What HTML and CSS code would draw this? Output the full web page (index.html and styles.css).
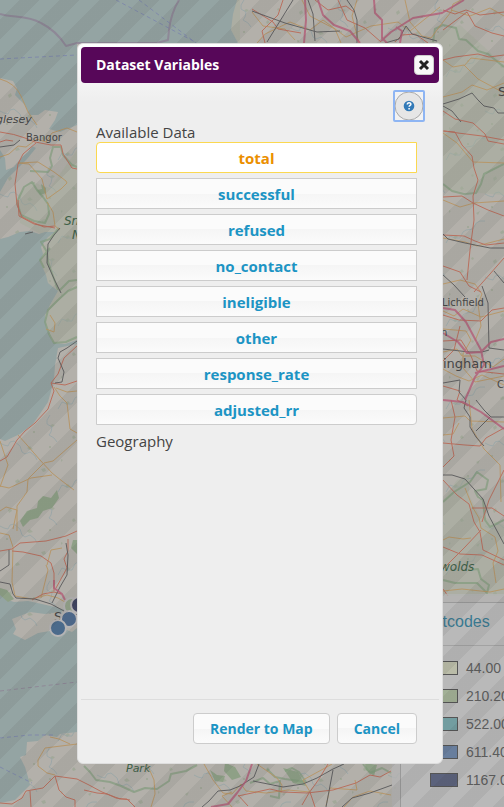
FILE: index.html
```
<!DOCTYPE html>
<html lang="en">
<head>
<meta charset="utf-8">
<meta name="viewport" content="width=device-width, initial-scale=1">
<title>Dataset Variables</title>
<link rel="stylesheet" href="styles.css">
</head>
<body>
<main class="app">
  <svg class="map" viewBox="0 0 504 807" preserveAspectRatio="xMinYMin slice" aria-label="Map of Wales and the Midlands">
    <defs>
      <pattern id="terrain" width="97" height="83" patternUnits="userSpaceOnUse">
        <g fill="#96a48d" opacity=".6"><path d="M8 12l3-2 1 3-3 2zM27 33l3-2 3 3-4 1zM52 9l3 1-2 2-3-1zM72 22l2-2 2 3-3 1zM88 47l4-2-2 4zM41 54l4-1 1 3-3 1zM15 66l3-2 2 3-4 1zM65 71l3-2 2 2-3 2zM83 9l2-1 1 2-2 1zM61 44l2 1-2 2zM33 16h2v2h-2zM79 60h2v2h-2zM6 40h2v2h-2zM49 31h2v2h-2z"/></g>
        <path class="river" d="M0 28l4 2 4 1 2-4 4-1 6 5 2 6 3 2 5-2 5 4 2 4M50 0l-3 5 0 4 5 3-1 5-2 3 5 3 3 4M97 55l-5 0-4 2-3 6-7 1-3 2-3 6-5 0-5-2-4 7"/>
      </pattern>
    </defs>
    <rect class="land" width="504" height="807"/>
    <rect class="terrain" width="504" height="807"/>
    <path class="park" d="M18 195L32 182L50 188L77 150V340L54 343L46 328L45 315L58 291L48 283L40 262L43 247L52 240L20 223ZM180 0H240V45H165ZM430 40L443 30L460 25L504 65V195L443 190ZM443 500L457 480L469 475V495L479 515L504 525V596H443Z"/>
    <path class="sea" d="M0 0H237L233 14L231 30L238 43H77V125L60 132L49 129L55 120L58 112L45 110L38 115L30 115L25 105L15 95L17 88L13 81L0 78Z"/>
    <path class="sea" d="M0 150L5 158L6 170L14 167L22 157L28 152L32 146L36 148L27 159L18 168L8 178L0 192ZM0 239L8 237L20 232L30 231L39 234L45 232L55 232L48 237L41 247L43 254L40 262L46 275L48 283L58 291L50 305L45 315L46 328L53 343L65 344L77 340V344L58 348L55 365L54 380L48 402L33 424L20 434L5 441L0 439Z"/>
    <path class="sea" d="M0 594L8 600L14 602L28 601L42 604L55 607L66 610L60 612L45 614L30 612L12 619L16 629L13 634L25 640L38 633L50 631L62 628L72 632L77 628V732L60 734L57 737L45 735L38 741L27 742L26 755L20 757L25 767L28 777L30 785L15 800L0 803Z"/>
    <path class="forest" d="M23 527L20 521L27 511L37 508L38 501L43 496L51 498L57 490L59 498L52 508L43 511L38 518L30 520ZM0 588L7 590L14 599L8 602L0 595ZM210 770l7 5 8 1-2 6-8-1zM225 763l10 4 6 10-9 3-8-9zM283 768l15 4 8 14-13-3zM365 763l12 2-3 11-8-6zM37 190l5-1-1-5 5 4 0 5-6 2zM73 540h4v14l-6-6z"/>
    <path class="boundary" d="M0 14C13 18 27 15 41 23C51 28 59 35 66 46L77 43H157L168 40L169 30Q171 13 179 0"/>
    <path class="boundary dash" d="M0 691L77 682"/>
    <path class="ferry" d="M0 59L77 55M116 0L195 42M139 0L196 43M0 738L30 735H55M0 767L32 783"/>
    <g class="green">
      <path d="M32 182L24 187L17 202L21 215L34 221L45 223L49 214L48 204L43 197L37 190ZM30 171L48 172L52 166L50 158L53 147L61 147L63 155L72 165L77 167M59 228L50 239L41 242L47 252L48 262L58 290M50 248L40 260L44 268M77 280L69 281L59 291M77 287L68 291L58 300L48 310L45 322L49 334L54 343L66 342L77 337M433 42L435 29L443 25L456 28L459 39L466 40L478 51L488 54L504 67M443 184L452 191L464 194L476 193L481 184L484 174L504 164M443 502L454 492L470 482L477 472L488 480L486 489L475 491L478 497L483 500L485 520L490 527L504 520M443 580L455 583L477 583L487 593L489 585L481 579L478 569L468 570M84 766L90 772L96 780L110 782L121 786L134 792L145 788L157 789L169 781L171 774L186 771L197 765M250 783L263 778L270 784L280 781L279 798L270 796M267 769L275 777L285 779L306 782L299 772L292 768L285 771M363 764L370 773L382 768L391 773"/>
    </g>
    <g class="minor">
      <path d="M0 79Q15 83 21 96L28 112L37 125M0 157L9 154L18 146L26 147L37 139L46 142L52 133L67 128L77 132M18 163L29 164L42 179L47 199L61 189L67 183L66 181L54 172L38 162L18 163M47 202L53 212L55 226L60 230M0 511L6 507L17 510L13 529M17 531L17 506L27 492L28 479L44 463L53 461L77 440M18 435L27 445L40 460L52 473L62 481L74 490M0 533L9 535L13 547L12 582L15 596L32 599L47 595L58 598L65 602M41 598L48 570L46 565M47 565L51 550L62 548M0 486L9 488L31 478L52 475M54 387L60 396L67 403L70 429L77 433M0 441L8 465L0 487M56 388L67 392L77 391M50 315L55 323L54 332L46 329M45 748L38 760L38 766L47 773L55 775M45 748L77 744M50 737L59 739L70 744"/>
      <path d="M252 12L263 26L285 29L295 40M257 43L265 34L290 22L310 30L323 20L346 37L371 26L398 22L410 31L440 7M302 0L310 16L335 29L341 43M357 0L352 16L359 43M405 0L410 22L422 36L431 38L443 22L451 12L453 4L461 0M451 10L470 16L490 8L504 16M443 60L453 67L464 65L478 79L504 93M443 97L462 92L472 85L487 90L504 83M464 66L471 58L504 62M443 133L457 143L473 162L504 163M443 200L460 207L474 203L504 201M443 238L465 242L477 246L504 239M443 284L460 280L475 284L482 294L478 304L481 326L475 341M443 311L454 316L463 309L481 317L504 311M443 329L466 331L471 340L463 354L463 368L475 382L504 376M443 352L457 349L462 356L475 356L493 367L504 359M443 369L456 376L469 381L482 375L504 385M443 418L465 416L470 421L504 422M469 400L472 429L484 449L500 465L501 502M443 540L449 537L463 539L471 538M443 435L453 434L459 423M465 488L473 508L479 518L481 528L495 537L498 551L493 563L496 583M443 591L462 589L490 592L504 589"/>
      <path d="M147 764L154 780L155 794L151 807M204 764L213 780L223 793L232 794L241 784L246 791L266 793L288 790L310 792M232 792L222 796L232 807M257 764L277 778L282 785L281 793M310 792L303 780L325 768L332 764M326 806L330 788L357 790L355 780M344 807L353 797L370 791L391 795"/>
    </g>
    <g class="major">
      <path d="M0 132Q15 134 25 138L35 142L51 145L61 145L63 154L72 168L77 169M36 143L23 154L18 164L15 184L17 205L22 217L34 223L44 227L55 226M0 142L6 140L13 141M18 200L19 216L34 224L55 228M0 461L7 457L17 440L25 431L35 423L48 409L54 391L51 383L58 374L64 358L77 346M51 383L65 385L77 381M0 551L12 549L20 543L46 541L66 536L77 531M12 551L23 552L41 556L51 563L54 573L54 591M68 539L68 551L64 559L67 568L56 588M32 600L43 594L54 592L61 594M0 803L12 804L22 798L26 791L43 788L55 776L77 779L89 785L102 792L120 799L127 799L135 807M55 776L59 790L66 797L75 800L75 807M30 791L31 807"/>
      <path d="M283 0L278 15L262 31L265 43M252 9L273 22L278 29L301 33M338 0L347 20L365 28L381 42M315 0L328 10L346 6L354 12M443 10L455 14L466 10L480 15L504 12M443 30L467 12L475 26L492 33L504 36M395 42L402 35L415 34L428 43M443 60L455 57L478 54L489 57L504 55M443 111L455 119L473 123L485 134L488 141L504 144M443 131L455 132L462 145L472 156L474 168L478 180L473 196L474 220L470 250L467 280M443 197L462 196L473 203L488 210L504 216M443 235L464 236L475 241L486 245L504 243M444 131L458 133L482 136L504 140M443 266L460 272L469 286L481 292M504 258L490 274L474 292M443 315L459 320L481 321L492 310L504 308M443 341L461 340L471 356L477 371L504 374M443 361L454 350L460 326M443 386L460 391L457 400L468 406M443 443L465 445L480 446L486 438L504 428M451 400L455 417L451 440L454 456L443 467M443 480L457 495L469 504L474 522L480 532L483 550L504 560M504 470L489 500L482 522M481 530L465 547L450 562L443 569M472 508L492 508L504 516M443 547L460 554L482 555L504 565M443 589L448 596"/>
      <path d="M84 790L97 793L107 794L116 798L130 800M238 796L252 793L270 789L283 792L307 793L333 790L356 783L370 775L380 777L391 771M328 764L319 779L309 793L302 805M310 792L315 807M238 795L248 806"/>
    </g>
    <g class="rail">
      <path d="M0 147L14 145L20 140M33 232L25 234M77 341L67 348L60 352L58 358L64 372L62 382L55 383M9 550L9 565L0 571M0 582L10 584L13 594L16 598L35 599L51 604L64 611M52 603L60 587L67 575L68 555L66 543M60 228L54 235L48 244L47 263L55 281L61 293"/>
      <path d="M252 11L285 23L317 32L340 31M293 0L267 42M308 0L313 14L315 41M347 0L354 10L357 20L357 43M385 43L399 39L406 26L412 34L437 41M443 104L459 99L472 93L478 100L484 106L494 108L498 113L504 113M443 106L452 111L461 122M443 234L448 239L465 243L490 248L504 248M443 275L454 285L465 297M504 283L494 271M482 286L488 303L489 348L504 350M443 349L469 352L482 352L489 350M443 383L460 380L459 392L466 400L464 408L470 417L470 427L476 437L484 446M476 400L484 410L491 417L504 417M476 431L490 417M443 475L452 475L465 479L474 489L483 499L489 516L504 544M259 764L254 777L240 786L230 790L218 791L209 801L202 807M253 781L263 783L283 787L303 784L317 778L333 769L344 764M333 770L326 807M342 807L352 798L370 793L392 785"/>
    </g>
    <g class="motorway"><path d="M305 0L306 20L304 43M318 0L323 15L334 25L350 31L360 43M374 0L375 13L382 20L382 38L387 43M381 41L391 32L413 18L442 13L464 0M400 43L402 31L396 27M443 308L455 310L466 322L474 337L481 350L484 365L475 377L465 400M443 333L458 342L467 353L481 352L491 342L504 339M475 373L504 366M443 400L463 402L481 412L504 429M54 580L54 588L62 594L65 600M252 764L246 781L237 793L228 804L211 807"/></g>
    <g class="place">
      <text x="-4" y="123" class="italic">glesey</text><text x="26" y="141">Bangor</text>
      <text x="498" y="96" class="city">S</text><text x="442" y="306">Lichfield</text><text x="441" y="336">n</text><text x="443" y="368" class="city">ingham</text><text x="497" y="388" class="town">C</text>
      <text x="64" y="225" class="region">Sn</text><text x="72" y="239" class="region">N</text><text x="440" y="571" class="region">wolds</text><text x="126" y="772" class="parkname">Park</text><text x="54" y="621" class="city">Swa</text>
    </g>
    <g class="markers"><circle cx="72" cy="606" r="8" fill="#93a38a"/><circle cx="69" cy="619" r="8" fill="#4d6788"/><circle cx="58" cy="628" r="8" fill="#4b6a8b"/><circle cx="79" cy="605" r="8" fill="#404460"/></g>
  </svg>

  <aside class="legend" aria-label="Map legend">
    <h2 class="legend-title">Postcodes</h2>
    <ul class="legend-list">
      <li><span class="swatch cream"></span>44.00</li>
      <li><span class="swatch green-fill"></span>210.20</li>
      <li><span class="swatch teal"></span>522.00</li>
      <li><span class="swatch blue"></span>611.40</li>
      <li><span class="swatch navy"></span>1167.00</li>
    </ul>
  </aside>
  <div class="overlay"></div>

  <section class="dialog" role="dialog" aria-labelledby="dialog-title">
    <header class="titlebar">
      <h1 id="dialog-title">Dataset Variables</h1>
      <button class="close" type="button" aria-label="Close"><svg width="12" height="12" viewBox="0 0 12 12"><path d="M2 2l8 8M10 2l-8 8"/></svg></button>
    </header>
    <div class="content">
      <div class="help-row"><button class="help" type="button" aria-label="Help"><svg width="28" height="28" viewBox="0 0 28 28"><circle cx="14" cy="14" r="14" fill="#e6e6e6" stroke="#aaa"/><circle cx="14" cy="14" r="5.3" fill="#327ab8"/><path d="M12.3 12.6c0-2.5 3.6-2.3 3.6-.4 0 1.2-1.8 1.2-1.8 2.6M14.1 15.9v1.5" fill="none" stroke="#fff" stroke-width="1.5"/></svg></button></div>
      <p class="label">Available Data</p>
      <div class="variables">
        <button class="btn selected" type="button">total</button>
        <button class="btn" type="button">successful</button>
        <button class="btn" type="button">refused</button>
        <button class="btn" type="button">no_contact</button>
        <button class="btn" type="button">ineligible</button>
        <button class="btn" type="button">other</button>
        <button class="btn" type="button">response_rate</button>
        <button class="btn last" type="button">adjusted_rr</button>
      </div>
      <p class="label geography">Geography</p>
    </div>
    <footer class="actions"><button class="btn action" type="button">Render to Map</button><button class="btn action" type="button">Cancel</button></footer>
  </section>
</main>
</body>
</html>
```
FILE: styles.css
```
* { box-sizing: border-box; }
body { margin: 0; font-family: "Trebuchet MS", "Open Sans", sans-serif; font-size: 15px; color: #444; }
.app { position: relative; min-height: 100vh; overflow: hidden; padding: 43px 61px 43px 77px; }
.map { position: absolute; inset: 0; width: 100%; height: 100%; }
.land { fill: #b3b0aa; }
.terrain { fill: url(#terrain); }
.river, .green, .minor, .major, .rail, .motorway, .boundary, .ferry { fill: none; stroke-linejoin: round; }
.river { stroke: #91a3a5; stroke-width: 1; opacity: .7; }
.park { fill: #a4ad9c; opacity: .45; }
.sea { fill: #94a4a3; }
.forest { fill: #8ea086; }
.boundary { stroke: #8b7c91; stroke-width: 2; opacity: .7; }
.dash { stroke-dasharray: 4 3; stroke-width: 1; }
.ferry { stroke: #7a83ab; stroke-dasharray: 4 3; opacity: .8; }
.green { stroke: #7e9979; stroke-width: 2; opacity: .65; }
.minor { stroke: #b8935f; stroke-width: 1; opacity: .85; }
.major { stroke: #b9705f; stroke-width: 1; }
.rail { stroke: #626263; stroke-width: 1; }
.motorway { stroke: #b25c77; stroke-width: 2; opacity: .8; }
.place { font-family: "DejaVu Sans", sans-serif; font-size: 10px; fill: #464646; }
.place .italic { font-size: 11px; font-style: italic; }
.place .city { font-size: 13px; }
.place .town { font-size: 10px; }
.place .region { font-size: 12px; font-style: italic; fill: #3e6047; }
.place .parkname { font-size: 11px; font-style: italic; fill: #3e6047; }
.markers { stroke: #b6b4b5; stroke-width: 2; }
.legend { position: absolute; left: 400px; top: 602px; width: 260px; height: 230px; border: 1px solid #999; background: #b9b9b9; box-shadow: 0 0 0 8px rgb(180 180 180 / 75%); font-family: "Liberation Sans", sans-serif; font-size: 14px; color: #5c5c5c; }
.legend-title { margin: 0; padding: 9px 14px 13px; border-bottom: 1px solid #a2a2a2; font-size: 16px; line-height: 20px; font-weight: 400; color: #397a91; }
.legend-list { list-style: none; margin: 0; padding: 8px 0 0 29px; }
.legend-list li { display: flex; align-items: center; gap: 8px; height: 28px; white-space: nowrap; }
.swatch { width: 28px; height: 14px; border: 1px solid #555; }
.cream { background: #babca8; }
.green-fill { background: #a2b096; }
.teal { background: #729da0; }
.blue { background: #687e9d; }
.navy { background: #5b627c; }
.overlay { position: absolute; inset: 0; background-image: linear-gradient(135deg, transparent 25%, rgb(45 45 45 / 7%) 25% 50%, transparent 50% 75%, rgb(45 45 45 / 7%) 75%); background-size: 40px 40px; }
.dialog { position: relative; display: flex; flex-direction: column; min-height: 721px; padding: 3px; border: 1px solid #ddd; border-radius: 6px; background: #eee linear-gradient(#fff, #eee) 0 0 / 100% 58px no-repeat; }
.titlebar { display: flex; align-items: center; justify-content: space-between; height: 36px; padding: 0 5px 0 15px; border-radius: 4px; background: #570759; color: #fff; }
.titlebar h1 { margin: 0; font-size: 14px; line-height: 20px; font-weight: 700; }
.close { display: grid; place-items: center; width: 20px; height: 20px; padding: 0; border: 1px solid #ccc; border-radius: 4px; background: #f8f8f8; }
.close path { fill: none; stroke: #222; stroke-width: 3; }
.content { flex: 1; padding: 7px 22px 0 15px; }
.help-row { display: flex; justify-content: flex-end; margin-right: -8px; }
.help { display: grid; width: 32px; height: 32px; padding: 0; place-items: center; border: 2px solid #8eb5f3; border-radius: 2px; background: #f2f2f2; }
.label { margin: 0; line-height: 20px; }
.variables { display: grid; gap: 5px; }
.btn { height: 31px; padding: 0 16px; border: 1px solid #ccc; border-radius: 0; background: linear-gradient(#fbfbfb 50%, #f5f5f5 50%, #fbfbfb); color: #1c94c4; font: 700 15px/20px "Trebuchet MS", "Open Sans", sans-serif; }
.selected { border-color: #fbd850; border-radius: 4px 0 0 4px; background: #fff; color: #eb8f00; }
.last { border-radius: 0 4px 4px 0; }
.geography { margin-top: 6px; }
.actions { display: flex; justify-content: flex-end; gap: 7px; padding: 13px 22px 16px; border-top: 1px solid #ddd; }
.action { border-radius: 4px; font-size: 14px; }
```
